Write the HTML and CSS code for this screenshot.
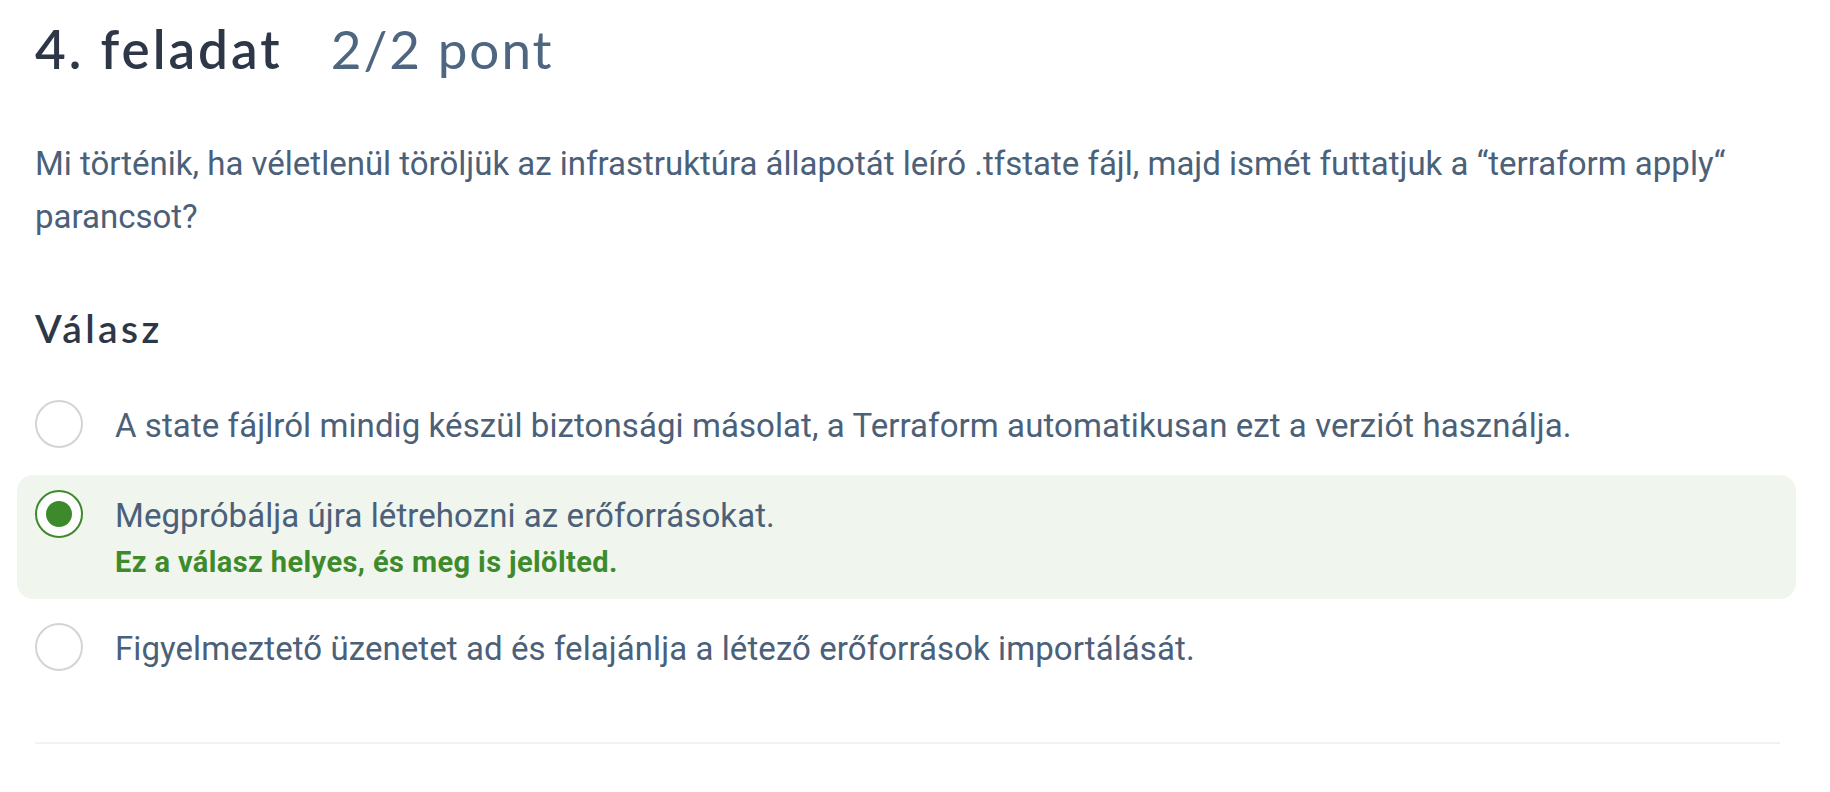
FILE: index.html
```html
<!DOCTYPE html>
<html lang="hu">
<head>
<meta charset="utf-8">
<title>4. feladat</title>
<link rel="stylesheet" href="styles.css">
</head>
<body>
<section class="task">
  <h2 class="task-title"><span class="task-num">4. feladat</span><span class="task-points">2/2 pont</span></h2>
  <p class="question">Mi történik, ha véletlenül töröljük az infrastruktúra állapotát leíró .tfstate fájl, majd ismét futtatjuk a “terraform apply“ parancsot?</p>
  <h3 class="answer-title">Válasz</h3>
  <ul class="options">
    <li class="option">
      <span class="radio"></span>
      <div class="option-body">
        <div class="option-text">A state fájlról mindig készül biztonsági másolat, a Terraform automatikusan ezt a verziót használja.</div>
      </div>
    </li>
    <li class="option option-correct">
      <span class="radio radio-checked"><span class="radio-dot"></span></span>
      <div class="option-body">
        <div class="option-text">Megpróbálja újra létrehozni az erőforrásokat.</div>
        <div class="feedback">Ez a válasz helyes, és meg is jelölted.</div>
      </div>
    </li>
    <li class="option">
      <span class="radio"></span>
      <div class="option-body">
        <div class="option-text">Figyelmeztető üzenetet ad és felajánlja a létező erőforrások importálását.</div>
      </div>
    </li>
  </ul>
  <hr class="divider">
</section>
</body>
</html>
```

FILE: styles.css
```css
html, body {
  margin: 0;
  padding: 0;
  background: #ffffff;
}

.task {
  width: 1745px;
  padding: 17px 0 0 35px;
  font-family: Roboto, "Liberation Sans", sans-serif;
  color: #4b6079;
}

.task-title {
  margin: 0;
  display: flex;
  align-items: baseline;
  font-family: Lato, "Noto Sans", sans-serif;
  font-size: 53px;
  line-height: 64px;
  font-weight: 600;
}

.task-num {
  color: #2d3748;
  letter-spacing: 3px;
}

.task-points {
  margin-left: 48px;
  color: #4e6680;
  font-weight: 400;
  letter-spacing: 2px;
}

.question {
  margin: 56px 0 0;
  font-size: 33px;
  line-height: 53px;
}

.answer-title {
  margin: 62px 0 0;
  font-family: Lato, "Noto Sans", sans-serif;
  font-size: 39px;
  line-height: 47px;
  font-weight: 600;
  color: #2d3748;
  letter-spacing: 3.4px;
}

.options {
  list-style: none;
  margin: 33px 0 0;
  padding: 0;
  display: flex;
  flex-direction: column;
  gap: 9px;
}

.option {
  display: flex;
  align-items: flex-start;
  gap: 32px;
  margin: 0 -16px 0 -18px;
  padding: 14px 16px 14px 18px;
  border-radius: 16px;
}

.option-correct {
  background: #f0f5ee;
  padding-bottom: 17px;
}

.radio {
  flex: none;
  box-sizing: border-box;
  width: 48px;
  height: 48px;
  margin-top: 1px;
  border: 2px solid #d4d4d4;
  border-radius: 50%;
  background: #ffffff;
  display: flex;
  align-items: center;
  justify-content: center;
}

.radio-checked {
  border-color: #3c8a2b;
}

.radio-dot {
  width: 26px;
  height: 26px;
  border-radius: 50%;
  background: #3c8a2b;
}

.option-body {
  display: flex;
  flex-direction: column;
}

.option-text {
  font-size: 33px;
  line-height: 53px;
  letter-spacing: 0.08px;
}

.feedback {
  font-size: 29px;
  line-height: 40px;
  font-weight: 700;
  letter-spacing: 0.4px;
  color: #3d8b2b;
}

.divider {
  margin: 53px 0 0;
  border: 0;
  height: 2px;
  background: #f1f2f4;
}
```
